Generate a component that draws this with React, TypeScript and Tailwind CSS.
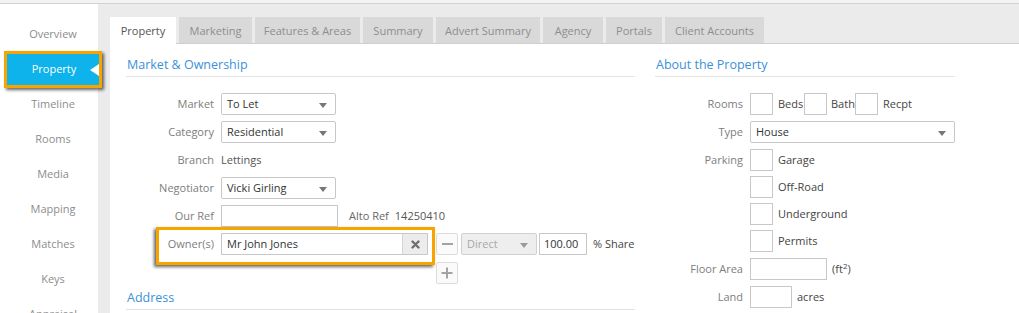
import React from "react";

const Arrow = ({ c = "border-t-[#777]" }: { c?: string }) => (
  <span className={`absolute right-[8px] top-[9px] h-0 w-0 border-x-[4px] border-t-[5px] border-x-transparent ${c}`} />
);

const Select = ({ value, w }: { value: string; w: string }) => (
  <div className={`relative flex h-[22px] ${w} items-center rounded-[2px] border border-[#c8c8c8] bg-white pl-[5px] text-[#333]`}>
    {value}
    <Arrow />
  </div>
);

const Box = ({ w = "w-[23px]" }: { w?: string }) => (
  <div className={`h-[22px] ${w} shrink-0 border border-[#c8c8c8] bg-white`} />
);

const Label = ({ children }: { children?: React.ReactNode }) => (
  <div className="w-[95px] shrink-0 pr-[7px] text-right text-[#7d7d7d]">{children}</div>
);

const Row = ({ label, children, cls = "" }: { label?: string; children?: React.ReactNode; cls?: string }) => (
  <div className={`flex h-[22px] items-center ${cls}`}>
    <Label>{label}</Label>
    {children}
  </div>
);

const Heading = ({ children, cls = "" }: { children: React.ReactNode; cls?: string }) => (
  <div className={`border-b border-[#e2e2e2] pb-[3px] pl-[1px] text-[12.5px] leading-[16px] text-[#3b91d8] ${cls}`}>{children}</div>
);

const sideItems = ["Overview", "Property", "Timeline", "Rooms", "Media", "Mapping", "Matches", "Keys", "Appraisal"];
const tabs: [string, string][] = [
  ["Property", "w-[66px]"],
  ["Marketing", "w-[73px]"],
  ["Features & Areas", "w-[105px]"],
  ["Summary", "w-[70px]"],
  ["Advert Summary", "w-[104px]"],
  ["Agency", "w-[60px]"],
  ["Portals", "w-[56px]"],
  ["Client Accounts", "w-[99px]"],
];

export default function App() {
  return (
    <div className="flex h-[313px] w-[1019px] flex-col overflow-hidden bg-white font-['Open_Sans',sans-serif] text-[11px]">
      <div className="h-[4px] shrink-0 border-b border-[#d2d2d2] bg-[#f3f3f3]" />
      <div className="flex min-h-0 flex-1">
        {/* Sidebar */}
        <div className="w-[98px] shrink-0 bg-white pt-[13px]">
          {sideItems.map((s) =>
            s === "Property" ? (
              <div
                key={s}
                className="relative -my-[1px] ml-[4px] flex h-[37px] w-[98px] items-center justify-center border-[3px] border-[#f7a300] bg-[#0db3ea] pl-[2px] text-white shadow-[2px_2px_3px_rgba(0,0,0,0.6)]"
              >
                {s}
                <span className="absolute right-0 top-[10px] h-0 w-0 border-y-[6px] border-r-[9px] border-y-transparent border-r-white" />
              </div>
            ) : (
              <div key={s} className="flex h-[35px] items-center justify-center pl-[8px] text-[#8d8d8d]">
                {s}
              </div>
            )
          )}
        </div>
        {/* Main */}
        <div className="flex min-w-0 flex-1 flex-col bg-[#ebebeb] pl-[12px] pt-[13px]">
          <div className="flex h-[27px] shrink-0 gap-[3px] border-b border-[#cfcfcf]">
            {tabs.map(([t, w], i) =>
              i === 0 ? (
                <div key={t} className={`${w} -mb-px flex h-[27px] items-center justify-center bg-white pt-[2px] text-[#555]`}>
                  {t}
                </div>
              ) : (
                <div key={t} className={`${w} flex h-[26px] items-center justify-center bg-[#d9d9d9] pt-[2px] text-[#8e8e8e]`}>
                  {t}
                </div>
              )
            )}
          </div>
          <div className="flex flex-1 gap-[20px] bg-white pl-[16px] pt-[13px]">
            {/* Left column */}
            <div className="w-[509px] shrink-0">
              <Heading>Market &amp; Ownership</Heading>
              <div className="mt-[16px] flex flex-col gap-[6px]">
                <Row label="Market">
                  <Select value="To Let" w="w-[115px]" />
                </Row>
                <Row label="Category">
                  <Select value="Residential" w="w-[115px]" />
                </Row>
                <Row label="Branch">
                  <span className="text-[#555]">Lettings</span>
                </Row>
                <Row label="Negotiator">
                  <Select value="Vicki Girling" w="w-[115px]" />
                </Row>
                <Row label="Our Ref">
                  <Box w="w-[117px]" />
                  <span className="ml-[11px] text-[#666]">Alto Ref</span>
                  <span className="ml-[6px] text-[#555]">14250410</span>
                </Row>
                <Row label="Owner(s)" cls="relative">
                  <div className="flex h-[22px] w-[207px] border border-[#c8c8c8] bg-white">
                    <div className="flex flex-1 items-center pl-[5px] text-[#333]">Mr John Jones</div>
                    <div className="flex w-[25px] items-center justify-center border-l border-[#d5d5d5] bg-[#ececec]">
                      <svg width="9" height="9" viewBox="0 0 9 9">
                        <path d="M1.5 1.5L7.5 7.5M7.5 1.5L1.5 7.5" stroke="#6f6f6f" strokeWidth="2.4" strokeLinecap="round" />
                      </svg>
                    </div>
                  </div>
                  <div className="ml-[8px] flex h-[22px] w-[22px] items-center justify-center rounded-[2px] border border-[#dcdcdc] bg-[#fafafa]">
                    <span className="h-[2px] w-[11px] bg-[#a3a3a3]" />
                  </div>
                  <div className="relative ml-[3px] flex h-[22px] w-[76px] items-center rounded-[2px] border border-[#d0d0d0] bg-[#eeeeee] pl-[5px] text-[#a8a8a8]">
                    Direct
                    <Arrow c="border-t-[#9a9a9a]" />
                  </div>
                  <div className="ml-[2px] flex h-[22px] w-[48px] items-center border border-[#c8c8c8] bg-white pl-[4px] text-[#333]">
                    100.00
                  </div>
                  <span className="ml-[6px] text-[#444]">% Share</span>
                  <div className="pointer-events-none absolute left-[30px] top-[-6px] h-[38px] w-[279px] border-[3px] border-[#f7a300] shadow-[-2px_2px_3px_rgba(0,0,0,0.6)]" />
                </Row>
                <div className="mt-[1px] flex h-[22px] items-center pl-[310px]">
                  <div className="flex h-[22px] w-[22px] items-center justify-center rounded-[2px] border border-[#dcdcdc] bg-[#fafafa]">
                    <svg width="12" height="12" viewBox="0 0 12 12">
                      <path d="M6 0.5V11.5M0.5 6H11.5" stroke="#a3a3a3" strokeWidth="2" />
                    </svg>
                  </div>
                </div>
              </div>
              <Heading cls="mt-[6px] pb-[2px]">Address</Heading>
            </div>
            {/* Right column */}
            <div className="w-[300px] shrink-0">
              <Heading>About the Property</Heading>
              <div className="mt-[16px] flex flex-col">
                <Row label="Rooms">
                  <Box />
                  <span className="ml-[5px] w-[26px] text-[#444]">Beds</span>
                  <Box />
                  <span className="ml-[4px] w-[24px] text-[#444]">Bath</span>
                  <Box />
                  <span className="ml-[5px] text-[#444]">Recpt</span>
                </Row>
                <Row label="Type" cls="mt-[6px]">
                  <Select value="House" w="w-[205px]" />
                </Row>
                <Row label="Parking" cls="mt-[6px]">
                  <Box />
                  <span className="ml-[5px] text-[#444]">Garage</span>
                </Row>
                <Row cls="mt-[5px]">
                  <Box />
                  <span className="ml-[5px] text-[#444]">Off-Road</span>
                </Row>
                <Row cls="mt-[5px]">
                  <Box />
                  <span className="ml-[5px] text-[#444]">Underground</span>
                </Row>
                <Row cls="mt-[5px]">
                  <Box />
                  <span className="ml-[5px] text-[#444]">Permits</span>
                </Row>
                <Row label="Floor Area" cls="mt-[6px]">
                  <Box w="w-[77px]" />
                  <span className="ml-[5px] text-[#444]">
                    (ft<sup className="text-[8px]">2</sup>)
                  </span>
                </Row>
                <Row label="Land" cls="mt-[6px]">
                  <Box w="w-[42px]" />
                  <span className="ml-[5px] text-[#444]">acres</span>
                </Row>
              </div>
            </div>
          </div>
        </div>
      </div>
    </div>
  );
}
